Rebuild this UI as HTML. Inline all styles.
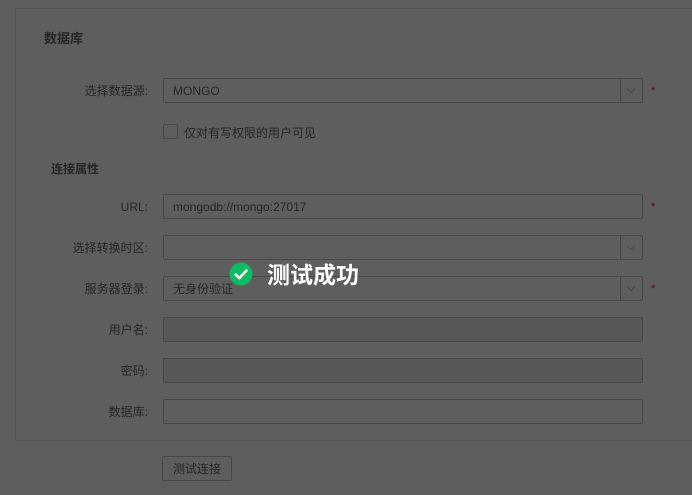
<!DOCTYPE html><html><head><meta charset="utf-8"><style>
body{margin:0;width:692px;height:495px;background:#5c5d5c;font-family:"Liberation Sans","Noto Sans CJK SC",sans-serif;font-size:12px;color:#262626;position:relative;overflow:hidden}
.panel{position:absolute;left:15px;top:8px;width:690px;height:431px;border:1px solid #555;background:#5e5e5e}
.a{position:absolute}
.lbl{position:absolute;right:544px;width:140px;text-align:right;line-height:25px;top:1px}
.f{position:absolute;left:163px;height:23px;border:1px solid #474747;border-radius:2px;line-height:25px;padding-left:9px;box-sizing:content-box;width:469px}
.dd{position:absolute;right:0;top:0;width:21px;height:23px;border-left:1px solid #474747}
.dd:after{content:"";position:absolute;left:7px;top:7px;width:5px;height:5px;border-right:1px solid #4a4a4a;border-bottom:1px solid #4a4a4a;transform:rotate(45deg)}
.dis{background:#575757}
.star{position:absolute;left:651px;color:#6a0000;font-size:11px}
</style></head><body>
<div class="panel"></div>
<div class="a" style="left:44px;top:28px;font-weight:bold;font-size:13px">数据库</div>
<div class="lbl" style="top:79px">选择数据源:</div>
<div class="f" style="top:78px">MONGO<div class="dd"></div></div><div class="star" style="top:85px">*</div>
<div class="a" style="left:163px;top:124px;width:13px;height:13px;border:1px solid #474747;border-radius:2px"></div>
<div class="a" style="left:184px;top:124px">仅对有写权限的用户可见</div>
<div class="a" style="left:51px;top:160px;font-weight:bold">连接属性</div>
<div class="lbl" style="top:195px">URL:</div>
<div class="f" style="top:194px">mongodb://mongo:27017</div><div class="star" style="top:201px">*</div>
<div class="lbl" style="top:236px">选择转换时区:</div>
<div class="f" style="top:235px"><div class="dd"></div></div>
<div class="lbl" style="top:277px">服务器登录:</div>
<div class="f" style="top:276px">无身份验证<div class="dd"></div></div><div class="star" style="top:283px">*</div>
<div class="lbl" style="top:318px">用户名:</div>
<div class="f dis" style="top:317px"></div>
<div class="lbl" style="top:359px">密码:</div>
<div class="f dis" style="top:358px"></div>
<div class="lbl" style="top:400px">数据库:</div>
<div class="f" style="top:399px"></div>
<div class="a" style="left:162px;top:456px;width:68px;height:23px;border:1px solid #474747;border-radius:2px;text-align:center;line-height:24px">测试连接</div>
<svg class="a" style="left:229px;top:262px" width="24" height="24" viewBox="0 0 24 24"><circle cx="12" cy="12" r="11.5" fill="#0dbb63"/><path d="M6.5 12.5l3.8 3.6 7.2-7.6" stroke="#fff" stroke-width="2.6" fill="none" stroke-linecap="round" stroke-linejoin="round"/></svg>
<div class="a" style="left:267px;top:259px;color:#fff;font-size:23px;font-weight:bold;line-height:32px">测试成功</div>
</body></html>
